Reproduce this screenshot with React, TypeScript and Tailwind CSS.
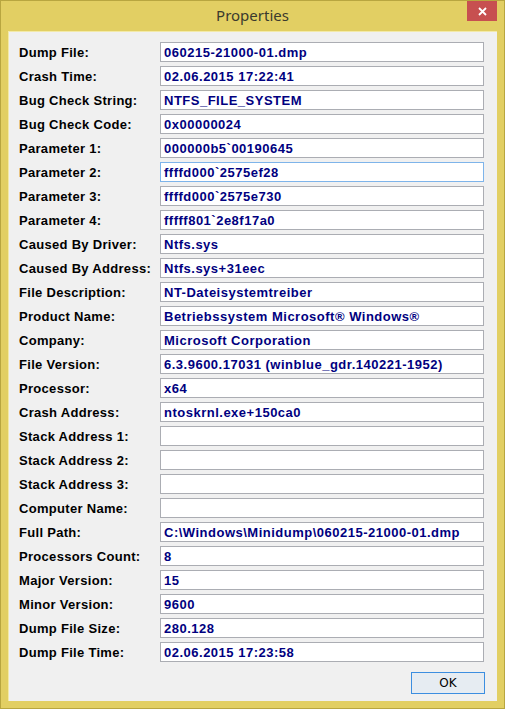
import React from "react";

type Field = { label: string; value: string; focused?: boolean };

const fields: Field[] = [
  { label: "Dump File:", value: "060215-21000-01.dmp" },
  { label: "Crash Time:", value: "02.06.2015 17:22:41" },
  { label: "Bug Check String:", value: "NTFS_FILE_SYSTEM" },
  { label: "Bug Check Code:", value: "0x00000024" },
  { label: "Parameter 1:", value: "000000b5`00190645" },
  { label: "Parameter 2:", value: "ffffd000`2575ef28", focused: true },
  { label: "Parameter 3:", value: "ffffd000`2575e730" },
  { label: "Parameter 4:", value: "fffff801`2e8f17a0" },
  { label: "Caused By Driver:", value: "Ntfs.sys" },
  { label: "Caused By Address:", value: "Ntfs.sys+31eec" },
  { label: "File Description:", value: "NT-Dateisystemtreiber" },
  { label: "Product Name:", value: "Betriebssystem Microsoft® Windows®" },
  { label: "Company:", value: "Microsoft Corporation" },
  { label: "File Version:", value: "6.3.9600.17031 (winblue_gdr.140221-1952)" },
  { label: "Processor:", value: "x64" },
  { label: "Crash Address:", value: "ntoskrnl.exe+150ca0" },
  { label: "Stack Address 1:", value: "" },
  { label: "Stack Address 2:", value: "" },
  { label: "Stack Address 3:", value: "" },
  { label: "Computer Name:", value: "" },
  { label: "Full Path:", value: "C:\\Windows\\Minidump\\060215-21000-01.dmp" },
  { label: "Processors Count:", value: "8" },
  { label: "Major Version:", value: "15" },
  { label: "Minor Version:", value: "9600" },
  { label: "Dump File Size:", value: "280.128" },
  { label: "Dump File Time:", value: "02.06.2015 17:23:58" },
];

const PropRow = ({ label, value, focused }: Field) => (
  <div className="flex h-[20px] items-center">
    <div className="w-[141px] shrink-0 text-[13px] font-bold leading-none tracking-[0.3px] text-black">{label}</div>
    <div
      className={
        "flex h-[20px] w-[324px] items-center border bg-white pl-[3px] text-[13px] font-bold leading-none tracking-[0.5px] text-[#000080] " +
        (focused ? "border-[#7eb4ea]" : "border-[#abadb3]")
      }
    >
      {value}
    </div>
  </div>
);

export default function App() {
  return (
    <div
      className="flex h-[709px] w-[505px] flex-col border border-[#b8a640] bg-[#e2cf63]"
      style={{ fontFamily: '"Liberation Sans", Arial, sans-serif' }}
    >
      {/* title bar */}
      <div className="relative flex h-[30px] shrink-0 items-center justify-center">
        <span
          className="-mt-[1px] text-[15px] text-[#3a3a2e]"
          style={{ fontFamily: '"Noto Sans", "Open Sans", sans-serif' }}
        >
          Properties
        </span>
        <div className="absolute right-[7px] top-0 flex h-[20px] w-[30px] items-center justify-center bg-[#c75050]">
          <svg width="9" height="9" viewBox="0 0 9 9">
            <path d="M1 1 L8 8 M8 1 L1 8" stroke="#fff" strokeWidth="1.8" />
          </svg>
        </div>
      </div>

      {/* client area */}
      <div className="mx-[7px] flex flex-1 flex-col border-t border-l border-[#f3eaa8] bg-[#f0f0f0] pl-[10px] pr-[12px] pt-[10px]">
        <div className="flex flex-col gap-[4px]">
          {fields.map((f) => (
            <PropRow key={f.label} {...f} />
          ))}
        </div>
        <div className="mt-[10px] flex justify-end">
          <button
            className="flex h-[22px] w-[74px] items-center justify-center border border-[#3c8ee0] bg-[#e6ecf2] text-black"
            style={{ fontFamily: '"DejaVu Sans", sans-serif', fontSize: "12px" }}
          >
            OK
          </button>
        </div>
      </div>
      <div className="h-[7px] shrink-0" />
    </div>
  );
}
